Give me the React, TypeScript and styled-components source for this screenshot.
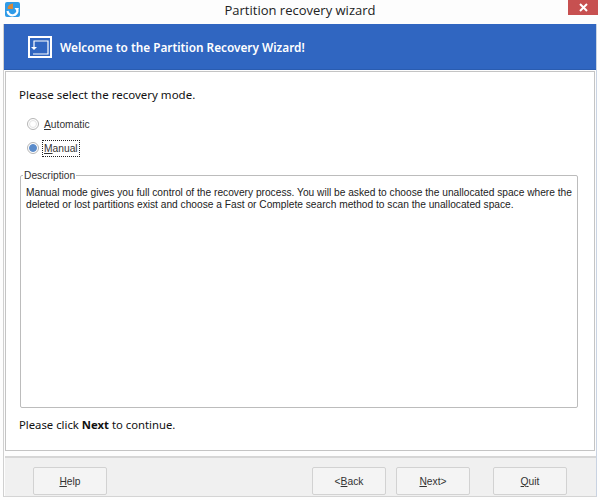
import styled, { createGlobalStyle } from "styled-components";

const GlobalStyle = createGlobalStyle`
  html, body {
    margin: 0;
    padding: 0;
    background: #fff;
  }
  body {
    font-family: "Liberation Sans", Arial, sans-serif;
    font-size: 11px;
    color: #1c1c1c;
  }
`;

const Window = styled.div`
  width: 600px;
  height: 500px;
  display: flex;
  flex-direction: column;
  background: #fdfdfd;
  overflow: hidden;
`;

const TitleBar = styled.div`
  height: 23px;
  flex: none;
  display: flex;
  align-items: flex-start;
  position: relative;
  margin-bottom: 1px;
`;

const AppIcon = styled.svg`
  position: absolute;
  left: 5px;
  top: 2px;
`;

const Title = styled.div`
  flex: 1;
  text-align: center;
  font-family: "Open Sans", sans-serif;
  font-size: 13px;
  line-height: 21px;
  color: #222;
`;

const CloseButton = styled.div`
  position: absolute;
  right: 2px;
  top: 0;
  width: 30px;
  height: 15px;
  background: #c75050;
  display: flex;
  align-items: center;
  justify-content: center;
`;

const Body = styled.div`
  flex: 1;
  margin: 0 3px 3px;
  display: flex;
  flex-direction: column;
  border-right: 1px solid #c9d3e2;
  border-bottom: 1px solid #d4d4d4;
  border-left: 1px solid #d0d0d0;
  min-height: 0;
`;

const Banner = styled.div`
  height: 46px;
  flex: none;
  background: #3066c1;
  border-bottom: 1px solid #2a5cb0;
  display: flex;
  align-items: center;
  padding-left: 24px;
  gap: 8px;
  box-sizing: border-box;
`;

const BannerText = styled.div`
  color: #fff;
  font-family: "Noto Sans", sans-serif;
  font-size: 11.8px;
  font-weight: 600;
`;

const Panel = styled.div`
  height: 380px;
  flex: none;
  margin: 1px 1px 0;
  box-sizing: border-box;
  background: #fff;
  border: 1px solid #c4c4c4;
  padding: 15px 16px 0 14px;
  display: flex;
  flex-direction: column;
`;

const Prompt = styled.div`
  font-family: "Noto Sans", sans-serif;
  font-size: 11.5px;
  line-height: 16px;
  margin-left: -1px;
  color: #111;
`;

const RadioGroup = styled.div`
  display: flex;
  flex-direction: column;
  gap: 8px;
  margin: 13px 0 0 7px;
`;

const RadioRow = styled.div`
  display: flex;
  align-items: center;
  gap: 5px;
  height: 16px;
`;

const RadioMark = styled.span<{ $checked?: boolean }>`
  width: 12px;
  height: 12px;
  box-sizing: border-box;
  border-radius: 50%;
  border: 1px solid #b5b5b5;
  background: #fff;
  display: flex;
  align-items: center;
  justify-content: center;
  &::after {
    content: "";
    width: 8px;
    height: 8px;
    box-sizing: border-box;
    border-radius: 50%;
    background: ${(p) => (p.$checked ? "#5b8ccb" : "#fff")};
    border: 1px solid ${(p) => (p.$checked ? "#5b8ccb" : "#e4e4e4")};
  }
`;

const RadioLabel = styled.span<{ $focused?: boolean }>`
  font-size: 10.25px;
  line-height: 13px;
  color: #333;
  outline: ${(p) => (p.$focused ? "1px dotted #222" : "none")};
  outline-offset: 1px;
`;

const Group = styled.fieldset`
  margin: 13px 0 0;
  padding: 5px 0 0 5px;
  border: 1px solid #bcbcbc;
  border-radius: 2px;
  box-sizing: border-box;
  height: 239px;
`;

const GroupTitle = styled.legend`
  padding: 0 1px;
  margin-left: -3px;
  font-size: 10.25px;
  line-height: 13px;
  color: #333;
`;

const GroupText = styled.p`
  margin: 0;
  font-size: 10.2px;
  line-height: 12px;
  color: #222;
`;

const Hint = styled.div`
  font-family: "Noto Sans", sans-serif;
  font-size: 11.3px;
  line-height: 16px;
  margin: 9px 0 0 -1px;
  color: #111;
`;

const Footer = styled.div`
  flex: 1;
  margin: 5px 0 0 1px;
  background: #f0f0f0;
  border-top: 2px solid #d6d6d6;
  display: flex;
  align-items: flex-start;
  padding: 9px 24px 0 28px;
  box-sizing: border-box;
`;

const Button = styled.div<{ $gap?: number }>`
  width: 74px;
  height: 28px;
  margin-left: ${(p) => p.$gap ?? 0}px;
  box-sizing: border-box;
  background: #f4f4f4;
  border: 1px solid #d2d2d2;
  border-radius: 2px;
  display: flex;
  align-items: center;
  justify-content: center;
  font-size: 10.25px;
  color: #333;
`;

function WindowIcon() {
  return (
    <AppIcon width="15" height="15" viewBox="0 0 15 15">
      <rect width="15" height="15" rx="2" fill="#2f9be8" />
      <path d="M2.5 9 A5 5 0 1 0 12.5 7.5" fill="none" stroke="#fff" strokeWidth="2.2" />
      <path d="M8 7 H2.5 A5.5 5.5 0 0 1 8 1.5 Z" fill="#d8893a" />
      <path d="M9.5 6 L14 6 L12 9.5 Z" fill="#fff" />
    </AppIcon>
  );
}

function BannerIcon() {
  return (
    <svg width="24" height="22" viewBox="0 0 24 22" fill="none" stroke="#fff">
      <rect x="1" y="1" width="22" height="20" strokeWidth="2" />
      <path d="M6 11 V5 H20 V18 H5" strokeWidth="1.2" />
      <path d="M3 11 H9 L6 14 Z" fill="#fff" stroke="none" />
    </svg>
  );
}

export default function App() {
  return (
    <>
      <GlobalStyle />
      <Window>
        <TitleBar>
          <WindowIcon />
          <Title>Partition recovery wizard</Title>
          <CloseButton>
            <svg width="9" height="9" viewBox="0 0 9 9">
              <path d="M1 1 L8 8 M8 1 L1 8" stroke="#fff" strokeWidth="2" />
            </svg>
          </CloseButton>
        </TitleBar>
        <Body>
          <Banner>
            <BannerIcon />
            <BannerText>Welcome to the Partition Recovery Wizard!</BannerText>
          </Banner>
          <Panel>
            <Prompt>Please select the recovery mode.</Prompt>
            <RadioGroup>
              <RadioRow>
                <RadioMark />
                <RadioLabel>
                  <u>A</u>utomatic
                </RadioLabel>
              </RadioRow>
              <RadioRow>
                <RadioMark $checked />
                <RadioLabel $focused>
                  <u>M</u>anual
                </RadioLabel>
              </RadioRow>
            </RadioGroup>
            <Group>
              <GroupTitle>Description</GroupTitle>
              <GroupText>
                Manual mode gives you full control of the recovery process. You will be asked to choose the unallocated space where the deleted or lost partitions exist and choose a Fast or Complete search method to scan the unallocated space.
              </GroupText>
            </Group>
            <Hint>
              Please click <b>Next</b> to continue.
            </Hint>
          </Panel>
          <Footer>
            <Button>
              <span>
                <u>H</u>elp
              </span>
            </Button>
            <Button $gap={205}>
              <span>
                &lt;<u>B</u>ack
              </span>
            </Button>
            <Button $gap={10}>
              <span>
                <u>N</u>ext&gt;
              </span>
            </Button>
            <Button $gap={23}>
              <span>
                <u>Q</u>uit
              </span>
            </Button>
          </Footer>
        </Body>
      </Window>
    </>
  );
}
